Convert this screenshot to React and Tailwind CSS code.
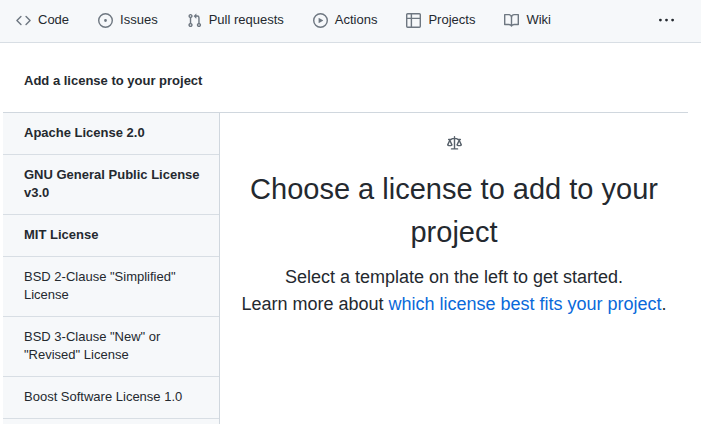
const paths = {
  code: 'M4.72 3.22a.75.75 0 011.06 1.06L2.06 8l3.72 3.72a.75.75 0 11-1.06 1.06L.47 8.53a.75.75 0 010-1.06l4.25-4.25zm6.56 0a.75.75 0 10-1.06 1.06L13.94 8l-3.72 3.72a.75.75 0 101.06 1.06l4.25-4.25a.75.75 0 000-1.06l-4.25-4.25z',
  issue: 'M8 9.5a1.5 1.5 0 100-3 1.5 1.5 0 000 3zM8 0a8 8 0 100 16A8 8 0 008 0zM1.5 8a6.5 6.5 0 1113 0 6.5 6.5 0 01-13 0z',
  pull: 'M7.177 3.073L9.573.677A.25.25 0 0110 .854v4.792a.25.25 0 01-.427.177L7.177 3.427a.25.25 0 010-.354zM3.75 2.5a.75.75 0 100 1.5.75.75 0 000-1.5zm-2.25.75a2.25 2.25 0 113 2.122v5.256a2.251 2.251 0 11-1.5 0V5.372A2.25 2.25 0 011.5 3.25zM11 2.5h-1V4h1a1 1 0 011 1v5.628a2.251 2.251 0 101.5 0V5A2.5 2.5 0 0011 2.5zm1 10.25a.75.75 0 111.5 0 .75.75 0 01-1.5 0zM3.75 12a.75.75 0 100 1.5.75.75 0 000-1.5z',
  play: 'M1.5 8a6.5 6.5 0 1113 0 6.5 6.5 0 01-13 0zM8 0a8 8 0 100 16A8 8 0 008 0zM6.379 5.227A.25.25 0 006 5.442v5.117a.25.25 0 00.379.214l4.264-2.559a.25.25 0 000-.428L6.379 5.227z',
  table: 'M0 1.75C0 .784.784 0 1.75 0h12.5C15.216 0 16 .784 16 1.75v3.585a.746.746 0 010 .83v8.085A1.75 1.75 0 0114.25 16H6.309a.748.748 0 01-1.118 0H1.75A1.75 1.75 0 010 14.25V6.165a.746.746 0 010-.83V1.75zM1.5 6.5v7.75c0 .138.112.25.25.25H5v-8H1.5zM5 5H1.5V1.75a.25.25 0 01.25-.25H5V5zm1.5 1.5v8h7.75a.25.25 0 00.25-.25V6.5h-8zm8-1.5h-8V1.5h7.75a.25.25 0 01.25.25V5z',
  book: 'M0 1.75A.75.75 0 01.75 1h4.253c1.227 0 2.317.59 3 1.501A3.744 3.744 0 0111.006 1h4.245a.75.75 0 01.75.75v10.5a.75.75 0 01-.75.75h-4.507a2.25 2.25 0 00-1.591.659l-.622.621a.75.75 0 01-1.06 0l-.622-.621A2.25 2.25 0 005.258 13H.75a.75.75 0 01-.75-.75V1.75zm8.755 3a2.25 2.25 0 012.25-2.25H14.5v9h-3.757c-.71 0-1.4.201-1.992.572l.004-7.322zm-1.504 7.324l.004-5.073-.002-2.253A2.25 2.25 0 005.003 2.5H1.5v9h3.757a3.75 3.75 0 011.994.574z',
  law: 'M8.75.75a.75.75 0 00-1.5 0V2h-.984c-.305 0-.604.08-.869.23l-1.288.737A.25.25 0 013.984 3H1.75a.75.75 0 000 1.5h.428L.066 9.192a.75.75 0 00.154.838l.53-.53-.53.53v.001l.002.002.002.002.006.006.016.015.045.04a3.514 3.514 0 00.686.45A4.492 4.492 0 003 11c.88 0 1.556-.22 2.023-.454a3.515 3.515 0 00.686-.45l.045-.04.016-.015.006-.006.002-.002.001-.002L5.25 9.5l.53.53a.75.75 0 00.154-.838L3.822 4.5h.162c.305 0 .604-.08.869-.23l1.289-.737a.25.25 0 01.124-.033h.984V13h-2.5a.75.75 0 000 1.5h6.5a.75.75 0 000-1.5h-2.5V3.5h.984a.25.25 0 01.124.033l1.29.736c.264.152.563.231.868.231h.162l-2.112 4.692a.75.75 0 00.154.838l.53-.53-.53.53v.001l.002.002.002.002.006.006.016.015.045.04a3.517 3.517 0 00.686.45A4.492 4.492 0 0013 11c.88 0 1.556-.22 2.023-.454a3.512 3.512 0 00.686-.45l.045-.04.01-.01.006-.005.006-.006.002-.002.001-.002-.529-.531.53.53a.75.75 0 00.154-.838L13.823 4.5h.427a.75.75 0 000-1.5h-2.234a.25.25 0 01-.124-.033l-1.29-.736A1.75 1.75 0 009.735 2H8.75V.75zM1.695 9.227c.285.135.718.273 1.305.273s1.02-.138 1.305-.273L3 6.327l-1.305 2.9zm10 0c.285.135.718.273 1.305.273s1.02-.138 1.305-.273L13 6.327l-1.305 2.9z',
  kebab: 'M8 9a1.5 1.5 0 100-3 1.5 1.5 0 000 3zM1.5 9a1.5 1.5 0 100-3 1.5 1.5 0 000 3zm13 0a1.5 1.5 0 100-3 1.5 1.5 0 000 3z',
};

function Icon({ name, className }) {
  return (
    <svg viewBox="0 0 16 16" fill="currentColor" fillRule="evenodd" aria-hidden="true" className={`size-[15px] shrink-0 ${className}`}>
      <path d={paths[name]} />
    </svg>
  );
}

const tabs = [
  { label: 'Code', icon: 'code' },
  { label: 'Issues', icon: 'issue' },
  { label: 'Pull requests', icon: 'pull' },
  { label: 'Actions', icon: 'play' },
  { label: 'Projects', icon: 'table' },
  { label: 'Wiki', icon: 'book' },
];

const licenses = [
  { name: 'Apache License 2.0', featured: true },
  { name: 'GNU General Public License v3.0', featured: true },
  { name: 'MIT License', featured: true },
  { name: 'BSD 2-Clause "Simplified" License' },
  { name: 'BSD 3-Clause "New" or "Revised" License' },
  { name: 'Boost Software License 1.0' },
];

export default function App() {
  return (
    <div className="flex min-h-screen flex-col bg-white font-['Liberation_Sans',Arial,sans-serif] text-[13px] leading-[18px] text-[#24292f]">
      <header className="flex items-center justify-between border-b border-[#d8dee4] bg-[#f6f8fa] pt-[11px] pr-[27px] pb-[13px] pl-4">
        <nav aria-label="Repository" className="flex gap-[29px]">
          {tabs.map((tab) => (
            <a key={tab.label} href="#" className="flex items-center gap-[7px] whitespace-nowrap">
              <Icon name={tab.icon} className="mt-px text-[#6e7781]" />
              {tab.label}
            </a>
          ))}
        </nav>
        <button type="button" aria-label="More options">
          <Icon name="kebab" className="mt-px" />
        </button>
      </header>

      <main className="mr-[13px] ml-[3px] flex flex-1 flex-col">
        <h1 className="border-b border-[#d0d7de] px-[21px] pt-[29px] pb-[22px] font-bold">Add a license to your project</h1>
        <div className="flex flex-1">
          <nav aria-label="License templates" className="w-[217px] shrink-0 border-r border-[#d0d7de] bg-[#f6f8fa]">
            {licenses.map((license) => (
              <button
                key={license.name}
                type="button"
                className={`block w-full border-b border-[#d8dee4] pt-[11px] pr-2 pb-3 pl-[21px] text-left ${license.featured ? 'font-bold' : ''}`}
              >
                {license.name}
              </button>
            ))}
          </nav>
          <section className="flex-1 pt-[23px] text-center">
            <Icon name="law" className="mx-auto text-[#57606a]" />
            <h2 className="mt-[17px] text-[29px] leading-[43px]">Choose a license to add to your project</h2>
            <p className="mt-2.5 text-lg leading-[27px]">
              Select a template on the left to get started.
              <br />
              Learn more about{' '}
              <a href="#" className="text-[#0969da]">which license best fits your project</a>.
            </p>
          </section>
        </div>
      </main>
    </div>
  );
}
